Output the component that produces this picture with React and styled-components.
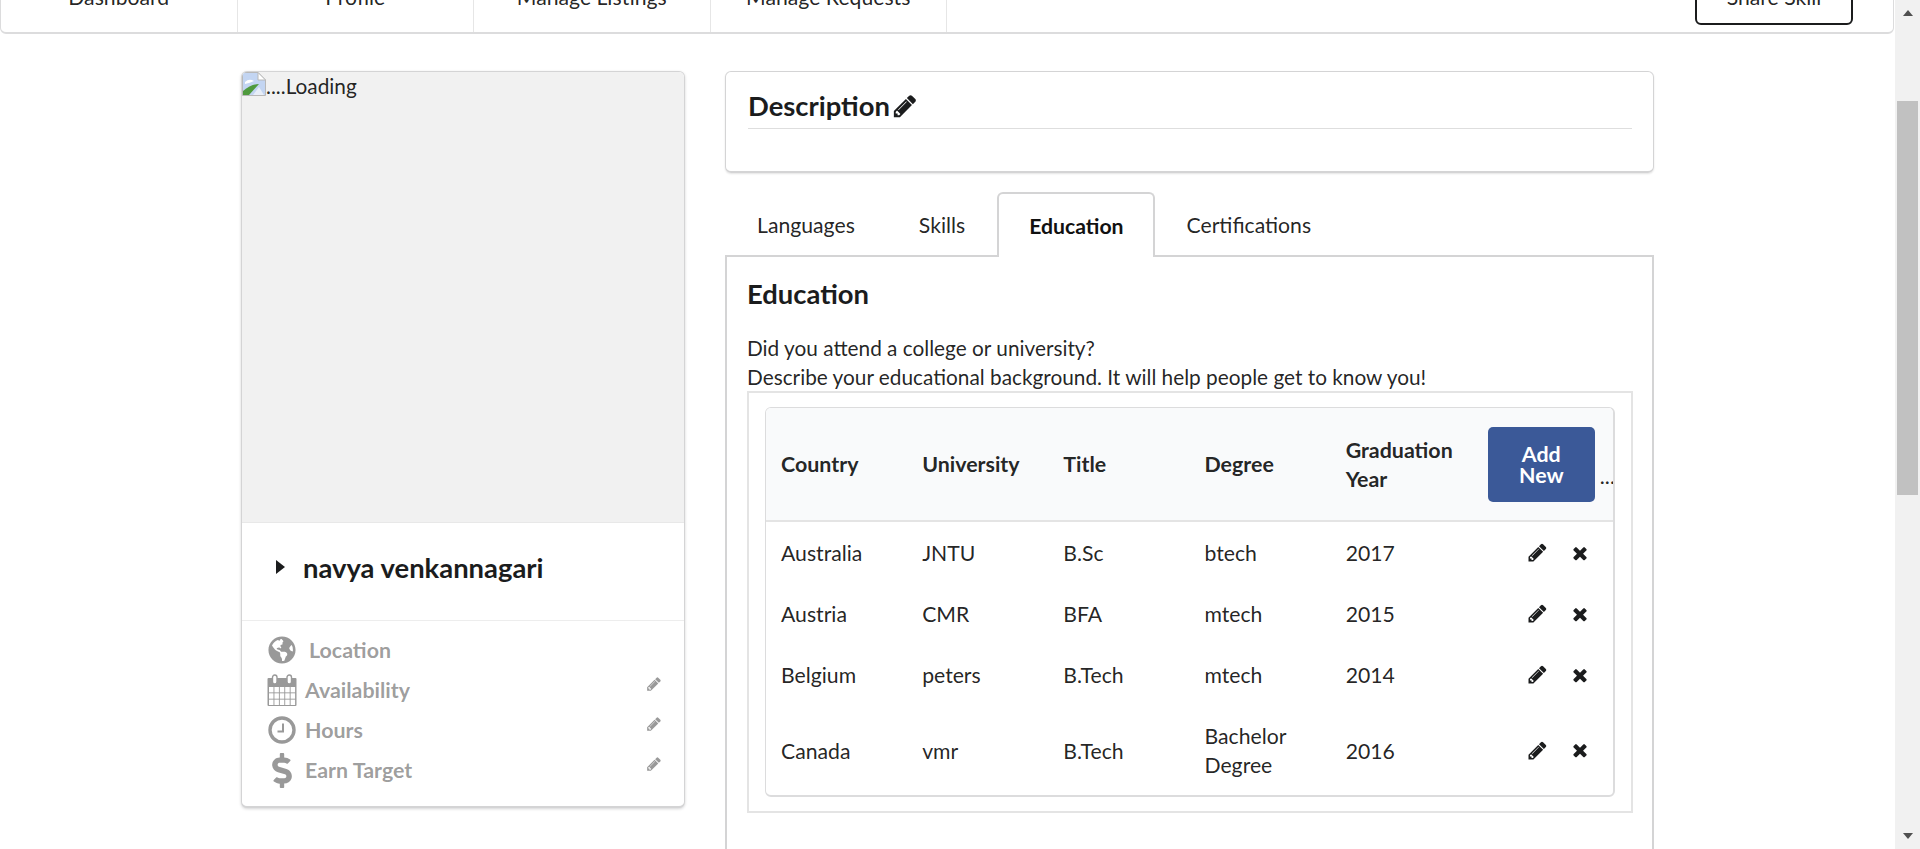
import styled, { createGlobalStyle } from "styled-components";
import { FaGlobeAmericas, FaDollarSign } from "react-icons/fa";

const GlobalStyle = createGlobalStyle`
  html, body {
    margin: 0;
    height: 100%;
    overflow: hidden;
    background: #fff;
    font-family: Lato, "Helvetica Neue", Arial, sans-serif;
    font-size: 21.2px;
    line-height: 28.57px;
    color: rgba(0, 0, 0, 0.87);
  }
  * { box-sizing: border-box; }
`;

const PENCIL =
  "M491 1536l91-91-235-235-91 91v107h128v128h107zm523-928q0-22-22-22-10 0-17 7l-542 542q-7 7-7 17 0 22 22 22 10 0 17-7l542-542q7-7 7-17zm-54-192l416 416-832 832h-416v-416zm683 96q0 53-37 90l-166 166-416-416 166-165q36-38 90-38 53 0 91 38l235 234q37 39 37 91z";
const CLOSE =
  "M1490 1322q0 40-28 68l-136 136q-28 28-68 28t-68-28l-294-294-294 294q-28 28-68 28t-68-28l-136-136q-28-28-28-68t28-68l294-294-294-294q-28-28-28-68t28-68l136-136q28-28 68-28t68 28l294 294 294-294q28-28 68-28t68 28l136 136q28 28 28 68t-28 68l-294 294 294 294q28 28 28 68z";

function PencilIcon({ size = 21, color = "#1b1c1d" }) {
  return (
    <svg width={size} height={size} viewBox="0 0 1792 1792" fill={color}>
      <path d={PENCIL} />
    </svg>
  );
}

function CloseIcon({ size = 20 }) {
  return (
    <svg width={size} height={size} viewBox="0 0 1792 1792" fill="#1b1c1d">
      <path d={CLOSE} />
    </svg>
  );
}

function CalendarIcon() {
  return (
    <svg width="30" height="32" viewBox="0 0 30 32" fill="none">
      <rect x="0.5" y="4" width="29" height="28" rx="1" fill="#999" />
      <g fill="#fff">
        {[13, 19.3, 25.6].map((y) =>
          [2, 7.4, 12.8, 18.2, 23.6].map((x) => (
            <rect key={`${x}-${y}`} x={x} y={y} width="4.5" height="5.4" />
          ))
        )}
      </g>
      <rect x="5.5" y="1" width="4.5" height="9" rx="2.2" fill="#fff" stroke="#999" strokeWidth="1.4" />
      <rect x="20" y="1" width="4.5" height="9" rx="2.2" fill="#fff" stroke="#999" strokeWidth="1.4" />
    </svg>
  );
}

function ClockIcon() {
  return (
    <svg width="28" height="28" viewBox="0 0 28 28" fill="none">
      <circle cx="14" cy="14" r="12" stroke="#999" strokeWidth="3.4" />
      <path d="M15 7.5V15.5H9.5" stroke="#999" strokeWidth="2" />
    </svg>
  );
}

function BrokenImage() {
  return (
    <svg width="24" height="24" viewBox="0 0 24 24">
      <path d="M0.5 0.5H16L23.5 8V23.5H0.5Z" fill="#c3d5f2" stroke="#b8b8b8" />
      <path d="M16 0.5V8H23.5Z" fill="#fff" stroke="#b8b8b8" />
      <path d="M3 10Q7 6 12 9Q8 11 3 12Z" fill="#fff" />
      <path d="M1 23V19Q9 12 17 12L7 23Z" fill="#4f9a3d" />
      <path d="M11 23L17 15L22 23Z" fill="#e8eef8" />
    </svg>
  );
}

const Viewport = styled.div`
  display: flex;
  width: 100%;
  height: 849px;
  overflow: hidden;
`;

const Page = styled.div`
  flex: 1;
  min-width: 0;
  margin-top: -37px;
`;

const TopMenu = styled.nav`
  display: flex;
  align-items: stretch;
  height: 71px;
  background: #fff;
  border: 1px solid #dcdcdd;
  border-bottom-width: 2px;
  border-radius: 0 0 6px 6px;
  margin-right: 1px;
`;

const MenuItem = styled.div`
  width: 236.5px;
  display: flex;
  align-items: center;
  justify-content: center;
  border-right: 1px solid #e6e6e6;
  padding-bottom: 2px;
`;

const MenuRight = styled.div`
  margin-left: auto;
  display: flex;
  align-items: flex-start;
  padding: 0 40px 0 0;
`;

const ShareButton = styled.button`
  width: 158px;
  height: 61px;
  padding-top: 6px;
  background: #fff;
  border: 2px solid #1b1c1d;
  border-radius: 6px;
  font: inherit;
  color: rgba(0, 0, 0, 0.87);
`;

const Columns = styled.div`
  display: grid;
  grid-template-columns: 444px 929px;
  column-gap: 40px;
  width: 1413px;
  margin: 37px auto 0 241px;
  align-items: start;
`;

const ProfileCard = styled.aside`
  border: 1px solid #d4d4d5;
  border-bottom-width: 2px;
  border-radius: 6px;
  box-shadow: 0 1px 3px #d4d4d5;
  overflow: hidden;
  height: 737px;
  background: #fff;
`;

const ImageSlot = styled.div`
  height: 451px;
  background: #f1f1f1;
  border-bottom: 1px solid #e8e8e8;
  display: flex;
  align-items: flex-start;
  font-size: 20.8px;
  line-height: 28px;
`;

const NameBlock = styled.div`
  height: 98px;
  display: flex;
  align-items: center;
  padding: 0 0 7px 34px;
  border-bottom: 1px solid #ededed;
`;

const Caret = styled.span`
  width: 0;
  height: 0;
  border-left: 9px solid #1b1c1d;
  border-top: 7.5px solid transparent;
  border-bottom: 7.5px solid transparent;
  margin: 0 18px 3px 0;
`;

const Name = styled.h2`
  margin: 0;
  font-size: 27.4px;
  line-height: 32px;
  font-weight: 700;
  color: #1b1c1d;
`;

const Extra = styled.ul`
  list-style: none;
  margin: 0;
  padding: 9px 23px 0 25px;
`;

const ExtraRow = styled.li`
  display: flex;
  align-items: center;
  height: 40px;
  color: rgba(0, 0, 0, 0.4);
  font-weight: 700;
  font-size: 21.4px;
`;

const ExtraIcon = styled.span`
  width: 30px;
  flex: none;
  display: flex;
  justify-content: center;
  align-items: center;
  margin-right: ${(p) => (p.$wide ? "12px" : "8px")};
  svg { display: block; }
`;

const ExtraEdit = styled.span`
  margin-left: auto;
  display: flex;
  margin-top: -12px;
  margin-right: -1px;
`;

const RightColumn = styled.section`
  min-width: 0;
`;

const DescriptionCard = styled.div`
  height: 102px;
  padding: 14px 21px 0 22px;
  border: 1px solid #d4d4d5;
  border-bottom-width: 2px;
  border-radius: 6px;
  box-shadow: 0 1px 2px #e4e4e4;
`;

const DescriptionTitle = styled.h3`
  margin: 0;
  display: flex;
  align-items: center;
  gap: 2px;
  height: 43px;
  padding-bottom: 3px;
  font-size: 27.4px;
  line-height: 40px;
  font-weight: 700;
  color: #1b1c1d;
  border-bottom: 1px solid #dedede;
`;

const Tabs = styled.div`
  display: flex;
  margin-top: 19px;
  margin-bottom: -2px;
  position: relative;
`;

const Tab = styled.div`
  height: 65px;
  padding: 1px 32px 0;
  display: flex;
  align-items: center;
  ${(p) =>
    p.$active &&
    `
    font-weight: 700;
    color: #111;
    background: #fff;
    border: 2px solid #d4d4d5;
    border-bottom: none;
    border-radius: 6px 6px 0 0;
    padding: 1px 29px 0 30px;
  `}
`;

const TabBody = styled.div`
  border: 2px solid #d4d4d5;
  padding: 19px 19px 0 20px;
  height: 700px;
`;

const SectionTitle = styled.h3`
  margin: 0 0 22px;
  font-size: 27.4px;
  line-height: 36px;
  font-weight: 700;
  color: #1b1c1d;
`;

const Intro = styled.p`
  margin: 0;
  font-size: 20.8px;
`;

const TableBox = styled.div`
  padding: 14px 16px 15px 16px;
  border: 2px solid #e4e4e4;
  height: 422px;
`;

const Table = styled.table`
  width: 850px;
  table-layout: fixed;
  border-collapse: separate;
  border-spacing: 0;
  border: 1px solid #dcdcdd;
  border-bottom-width: 2px;
  border-right-width: 2px;
  border-radius: 6px;
  overflow: hidden;
`;

const Th = styled.th`
  padding: 19px 17px 18px 15px;
  text-align: left;
  font-weight: 700;
  font-size: 21.4px;
  background: #f9fafb;
  color: rgba(0, 0, 0, 0.87);
  border-bottom: 2px solid #e4e4e4;
  overflow: hidden;
`;

const ActionHead = styled(Th)`
  padding: 19px 0 18px 16px;
  white-space: nowrap;
`;

const HeadInner = styled.div`
  display: flex;
  align-items: flex-end;
  gap: 5px;
  line-height: 28px;
`;

const HeadEllipsis = styled.span`
  font-weight: 400;
  margin-bottom: 12px;
`;

const AddButton = styled.button`
  flex: none;
  width: 107px;
  height: 75px;
  padding: 0 20px;
  border: none;
  border-radius: 5px;
  background: #3b5998;
  color: #fff;
  font: inherit;
  font-weight: 700;
  font-size: 21.4px;
  line-height: 21px;
  white-space: normal;
`;

const Td = styled.td`
  padding: 17px 17px 15px 15px;
  line-height: 29px;
`;

const ActionCell = styled.td`
  padding: 16px 17px;
`;

const RowActions = styled.div`
  display: flex;
  justify-content: flex-end;
  align-items: center;
  gap: 22px;
  padding-right: 6px;
  svg { display: block; }
`;

const education = [
  ["Australia", "JNTU", "B.Sc", "btech", "2017"],
  ["Austria", "CMR", "BFA", "mtech", "2015"],
  ["Belgium", "peters", "B.Tech", "mtech", "2014"],
  ["Canada", "vmr", "B.Tech", "Bachelor Degree", "2016"],
];

const ScrollTrack = styled.div`
  flex: none;
  width: 25px;
  height: 849px;
  background: #f1f1f1;
  display: flex;
  flex-direction: column;
  align-items: center;
  padding: 10px 2px;
`;

const ScrollArrow = styled.span`
  width: 0;
  height: 0;
  border-left: 5.5px solid transparent;
  border-right: 5.5px solid transparent;
  ${(p) => (p.$down ? "border-top: 6px solid #505050;" : "border-bottom: 6px solid #505050;")}
`;

const ScrollThumb = styled.div`
  width: 21px;
  height: 394px;
  margin-top: 85px;
  margin-bottom: auto;
  background: #c1c1c1;
`;

export default function App() {
  return (
    <>
      <GlobalStyle />
      <Viewport>
        <Page>
          <TopMenu>
            <MenuItem>Dashboard</MenuItem>
            <MenuItem>Profile</MenuItem>
            <MenuItem>Manage Listings</MenuItem>
            <MenuItem>Manage Requests</MenuItem>
            <MenuRight>
              <ShareButton>Share Skill</ShareButton>
            </MenuRight>
          </TopMenu>
          <Columns>
            <ProfileCard>
              <ImageSlot>
                <BrokenImage />
                ....Loading
              </ImageSlot>
              <NameBlock>
                <Caret />
                <Name>navya venkannagari</Name>
              </NameBlock>
              <Extra>
                <ExtraRow>
                  <ExtraIcon $wide>
                    <FaGlobeAmericas size={28} color="#999" />
                  </ExtraIcon>
                  Location
                </ExtraRow>
                <ExtraRow>
                  <ExtraIcon>
                    <CalendarIcon />
                  </ExtraIcon>
                  Availability
                  <ExtraEdit>
                    <PencilIcon size={16} color="#999" />
                  </ExtraEdit>
                </ExtraRow>
                <ExtraRow>
                  <ExtraIcon>
                    <ClockIcon />
                  </ExtraIcon>
                  Hours
                  <ExtraEdit>
                    <PencilIcon size={16} color="#999" />
                  </ExtraEdit>
                </ExtraRow>
                <ExtraRow>
                  <ExtraIcon>
                    <FaDollarSign size={35} color="#999" />
                  </ExtraIcon>
                  Earn Target
                  <ExtraEdit>
                    <PencilIcon size={16} color="#999" />
                  </ExtraEdit>
                </ExtraRow>
              </Extra>
            </ProfileCard>
            <RightColumn>
              <DescriptionCard>
                <DescriptionTitle>
                  Description
                  <PencilIcon size={26} />
                </DescriptionTitle>
              </DescriptionCard>
              <Tabs>
                <Tab>Languages</Tab>
                <Tab>Skills</Tab>
                <Tab $active>Education</Tab>
                <Tab>Certifications</Tab>
              </Tabs>
              <TabBody>
                <SectionTitle>Education</SectionTitle>
                <Intro>
                  Did you attend a college or university?
                  <br />
                  Describe your educational background. It will help people get to know you!
                </Intro>
                <TableBox>
                  <Table>
                    <thead>
                      <tr>
                        <Th>Country</Th>
                        <Th>University</Th>
                        <Th>Title</Th>
                        <Th>Degree</Th>
                        <Th>Graduation Year</Th>
                        <ActionHead>
                          <HeadInner>
                            <AddButton>Add New</AddButton>
                            <HeadEllipsis>...</HeadEllipsis>
                          </HeadInner>
                        </ActionHead>
                      </tr>
                    </thead>
                    <tbody>
                      {education.map((row) => (
                        <tr key={row[0]}>
                          {row.map((cell) => (
                            <Td key={cell}>{cell}</Td>
                          ))}
                          <ActionCell>
                            <RowActions>
                              <PencilIcon />
                              <CloseIcon />
                            </RowActions>
                          </ActionCell>
                        </tr>
                      ))}
                    </tbody>
                  </Table>
                </TableBox>
              </TabBody>
            </RightColumn>
          </Columns>
        </Page>
        <ScrollTrack>
          <ScrollArrow />
          <ScrollThumb />
          <ScrollArrow $down />
        </ScrollTrack>
      </Viewport>
    </>
  );
}
